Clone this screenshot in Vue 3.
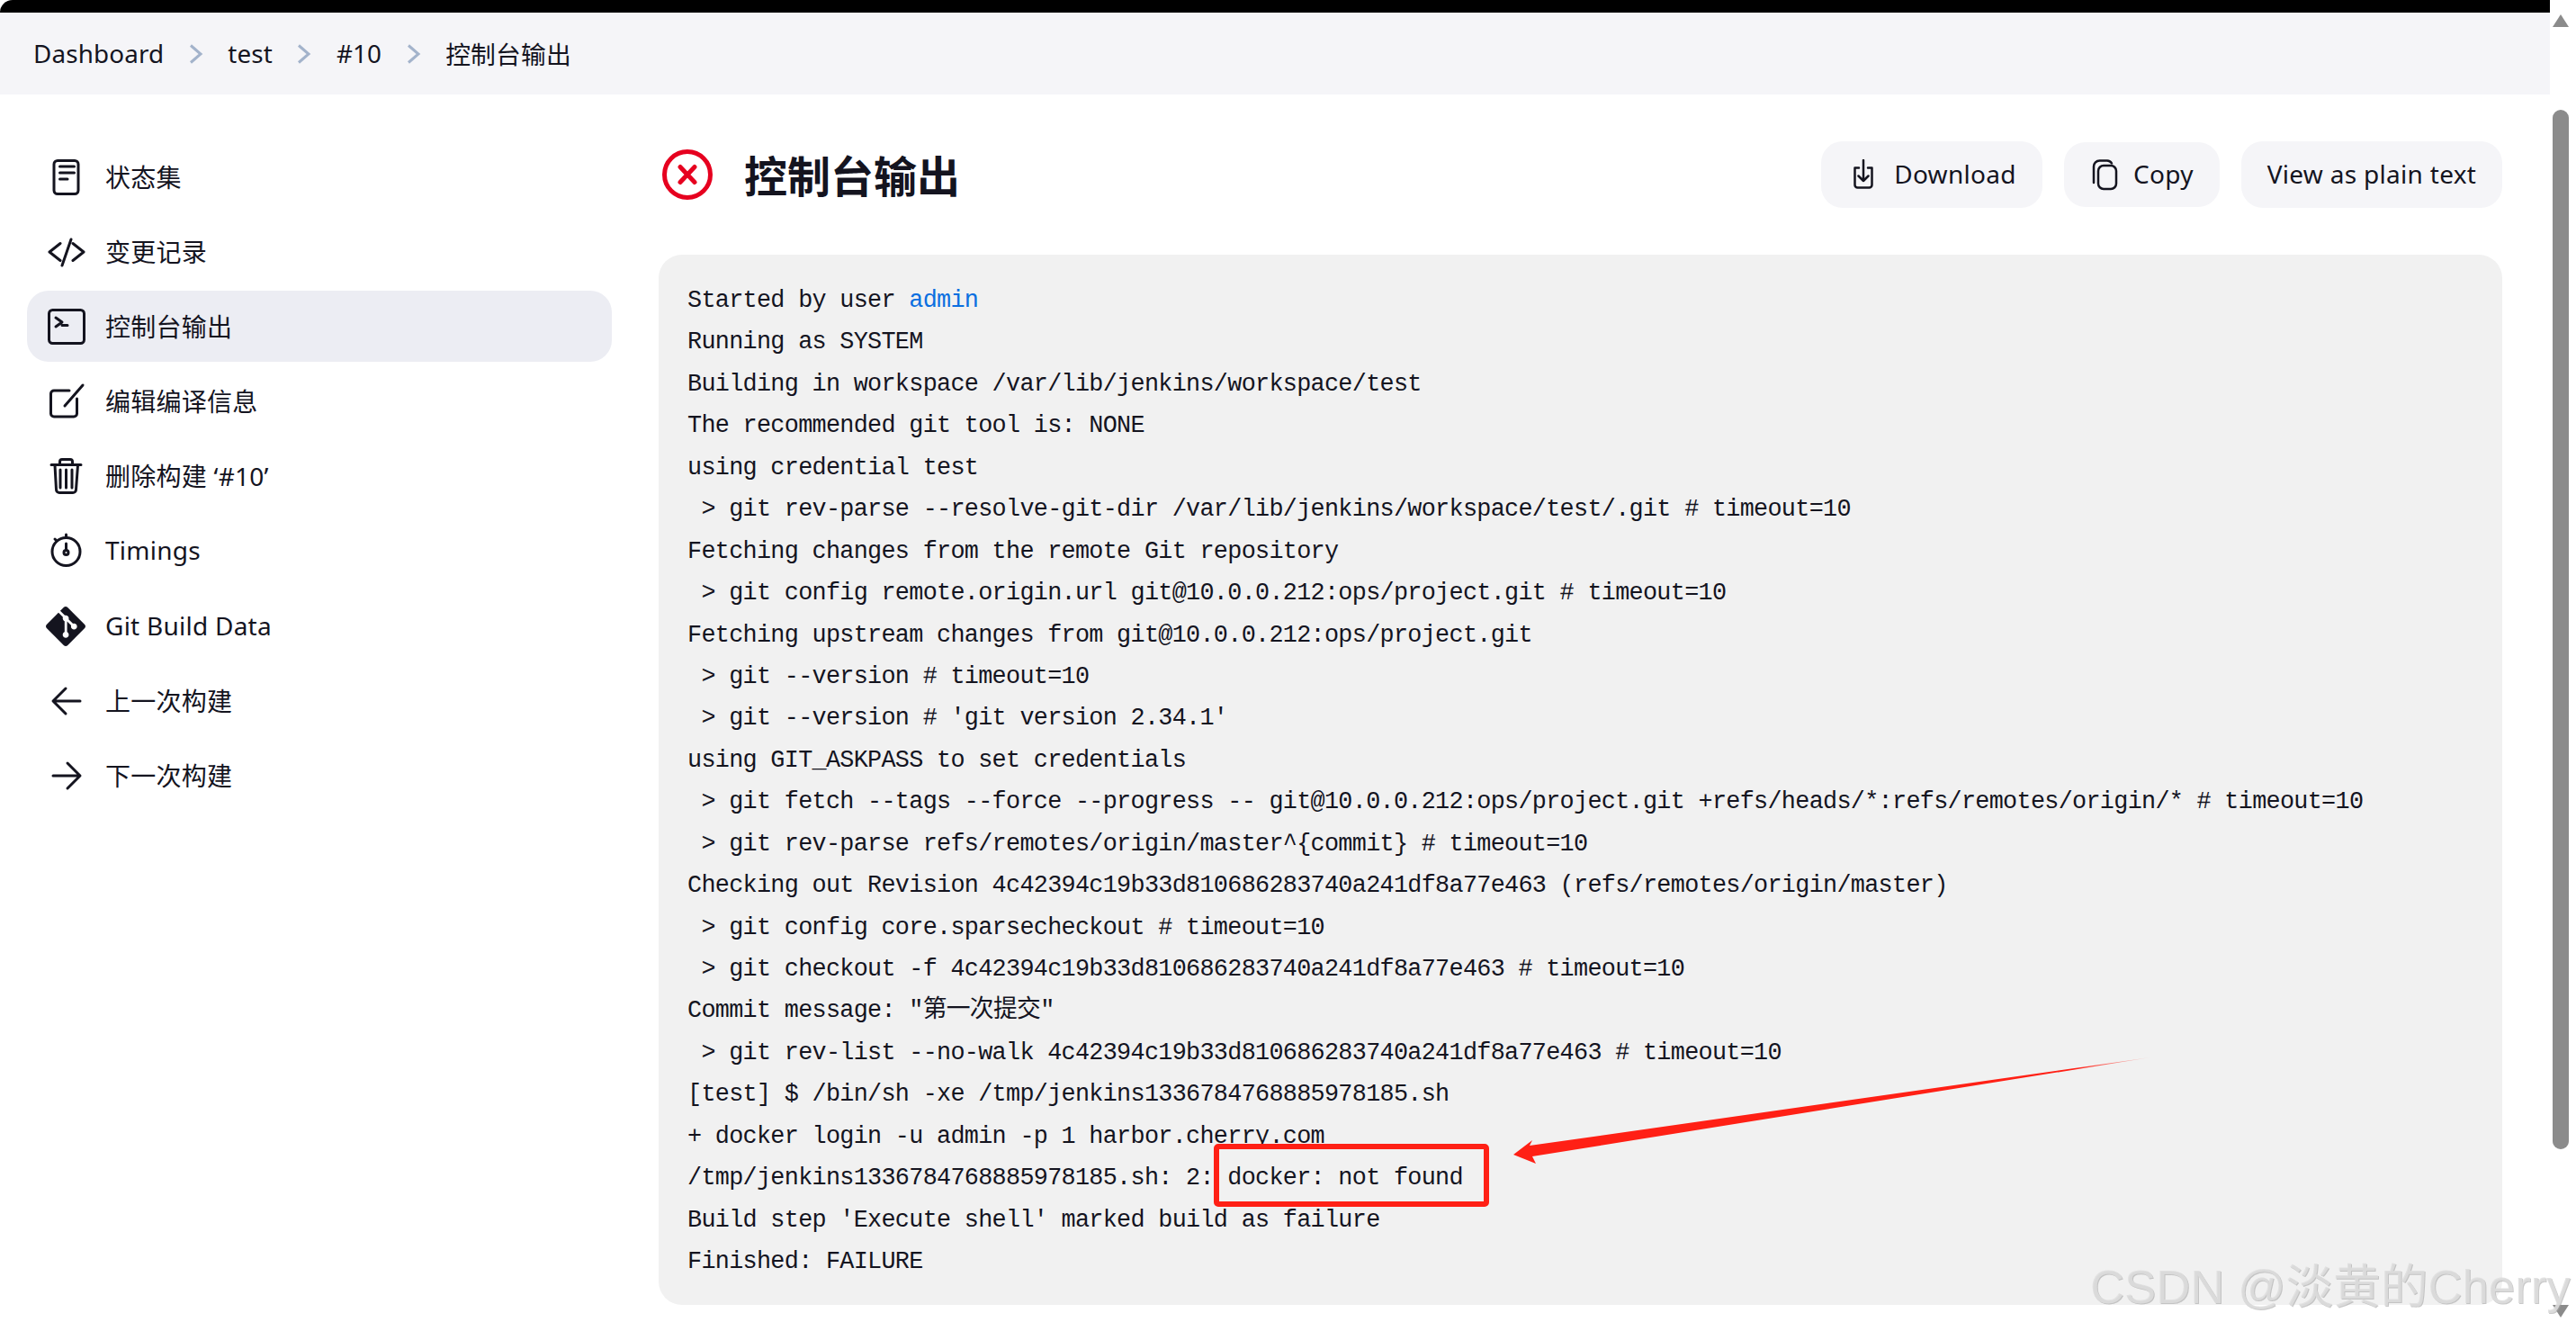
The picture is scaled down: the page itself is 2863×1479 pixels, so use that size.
<script setup>
const crumbs = ['Dashboard', 'test', '#10', '控制台输出']
const menu = [
  { id: 'doc', label: '状态集' },
  { id: 'code', label: '变更记录' },
  { id: 'term', label: '控制台输出', active: true },
  { id: 'edit', label: '编辑编译信息' },
  { id: 'trash', label: '删除构建 ‘#10’' },
  { id: 'timer', label: 'Timings' },
  { id: 'git', label: 'Git Build Data' },
  { id: 'prev', label: '上一次构建' },
  { id: 'next', label: '下一次构建' }
]
const lines = [
  'Running as SYSTEM',
  'Building in workspace /var/lib/jenkins/workspace/test',
  'The recommended git tool is: NONE',
  'using credential test',
  ' > git rev-parse --resolve-git-dir /var/lib/jenkins/workspace/test/.git # timeout=10',
  'Fetching changes from the remote Git repository',
  ' > git config remote.origin.url git@10.0.0.212:ops/project.git # timeout=10',
  'Fetching upstream changes from git@10.0.0.212:ops/project.git',
  ' > git --version # timeout=10',
  " > git --version # 'git version 2.34.1'",
  'using GIT_ASKPASS to set credentials',
  ' > git fetch --tags --force --progress -- git@10.0.0.212:ops/project.git +refs/heads/*:refs/remotes/origin/* # timeout=10',
  ' > git rev-parse refs/remotes/origin/master^{commit} # timeout=10',
  'Checking out Revision 4c42394c19b33d810686283740a241df8a77e463 (refs/remotes/origin/master)',
  ' > git config core.sparsecheckout # timeout=10',
  ' > git checkout -f 4c42394c19b33d810686283740a241df8a77e463 # timeout=10',
  'Commit message: "第一次提交"',
  ' > git rev-list --no-walk 4c42394c19b33d810686283740a241df8a77e463 # timeout=10',
  '[test] $ /bin/sh -xe /tmp/jenkins1336784768885978185.sh',
  '+ docker login -u admin -p 1 harbor.cherry.com',
  '/tmp/jenkins1336784768885978185.sh: 2: docker: not found',
  "Build step 'Execute shell' marked build as failure",
  'Finished: FAILURE'
]
</script>

<template>
  <div class="root">
    <div class="main">
      <div class="topbar"></div>
      <nav class="crumbs">
        <template v-for="(c, i) in crumbs" :key="c">
          <span class="crumb">{{ c }}</span>
          <svg v-if="i < crumbs.length - 1" class="chev" viewBox="0 0 16 22" width="16" height="22">
            <path d="M2 1.5 13 11 2 20.5" />
          </svg>
        </template>
      </nav>
      <div class="body">
        <aside class="side">
          <div v-for="m in menu" :key="m.id" class="item" :class="{ active: m.active }">
            <svg class="ico" viewBox="0 0 44 44" width="44" height="44">
              <g v-if="m.id === 'doc'">
                <rect x="9" y="3.5" width="27" height="37" rx="4" />
                <path d="M15.5 10h16M15.5 17h16M15.5 24h8.500" />
              </g>
              <g v-else-if="m.id === 'code'">
                <path d="M16 12.500 4 22l12 9.500M30 12.500 42 22l-12 9.500M28 8 18 37" />
              </g>
              <g v-else-if="m.id === 'term'">
                <rect x="3.500" y="3.500" width="39" height="37" rx="4" />
                <path d="M11 12l7 5-7 5M18 20.500h6" />
              </g>
              <g v-else-if="m.id === 'edit'">
                <path d="M26 10H9a3.500 3.500 0 0 0-3.500 3.500v22A3.500 3.500 0 0 0 9 39h22a3.500 3.500 0 0 0 3.500-3.500V19M41 4 21 27" />
              </g>
              <g v-else-if="m.id === 'trash'">
                <path d="M6 9.500h33M15.500 9V6a2.500 2.500 0 0 1 2.500-2.500h9A2.500 2.500 0 0 1 29.500 6v3M10 10l1.500 27a3.500 3.500 0 0 0 3.500 3.500h15a3.500 3.500 0 0 0 3.500-3.500L35.500 10M16 15v20M22.500 15v20M29 15v20" />
              </g>
              <g v-else-if="m.id === 'timer'">
                <circle cx="22.500" cy="23" r="15.500" />
                <circle cx="22.500" cy="24" r="2.500" />
                <path d="M22.500 21v-7M22.500 7.500V4M10 9l2 2" />
              </g>
              <g v-else-if="m.id === 'git'" transform="scale(1.833)">
                <path class="solid" d="M23.546 10.93L13.067.452c-.604-.603-1.582-.603-2.188 0L8.708 2.627l2.76 2.76c.645-.215 1.379-.07 1.889.441.516.515.658 1.258.438 1.9l2.658 2.66c.645-.223 1.387-.078 1.9.435.721.72.721 1.884 0 2.604-.719.719-1.881.719-2.6 0-.539-.541-.674-1.337-.404-1.996L12.86 8.955v6.525c.176.086.342.203.488.348.713.721.713 1.883 0 2.6-.719.721-1.889.721-2.609 0-.719-.719-.719-1.879 0-2.598.182-.18.387-.316.605-.406V8.835c-.217-.091-.424-.222-.6-.401-.545-.545-.676-1.342-.396-2.009L7.636 3.7.45 10.881c-.6.605-.6 1.584 0 2.189l10.48 10.477c.604.604 1.582.604 2.186 0l10.43-10.43c.605-.603.605-1.582 0-2.187" />
              </g>
              <g v-else-if="m.id === 'prev'">
                <path d="M38 22H9M22 8 8 22l14 14" />
              </g>
              <g v-else>
                <path d="M8 22h29M24 8l14 14-14 14" />
              </g>
            </svg>
            <span class="label">{{ m.label }}</span>
          </div>
        </aside>
        <section class="content">
          <header class="head">
            <svg class="err" viewBox="0 0 58 58" width="58" height="58">
              <circle cx="29" cy="29" r="25.500" />
              <path d="M21 20.500 37 37.500M37 20.500 21 37.500" />
            </svg>
            <h1 class="title">控制台输出</h1>
            <div class="actions">
              <div class="btn dl">
                <svg class="bico" viewBox="0 0 28 34" width="28" height="34">
                  <path d="M9 9.500H4.500v19a3 3 0 0 0 3 3h13a3 3 0 0 0 3-3v-19H19M14 1v23M8.500 18.500 14 24l5.500-5.500" />
                </svg>
                <span>Download</span>
              </div>
              <div class="btn narrow">
                <svg class="bico" viewBox="0 0 32 36" width="32" height="36">
                  <rect x="9" y="8" width="20" height="26" rx="6" />
                  <path d="M4 27V9a6.500 6.500 0 0 1 6.500-6.500H19a6 6 0 0 1 5 3" />
                </svg>
                <span>Copy</span>
              </div>
              <div class="btn plain"><span>View as plain text</span></div>
            </div>
          </header>
          <pre class="console"><div class="line">Started by user <span class="link">admin</span></div><div v-for="(l, i) in lines" :key="i" class="line">{{ l }}</div></pre>
        </section>
      </div>
    </div>
    <div class="scroll">
      <div class="arrow up"></div>
      <div class="thumb"></div>
      <div class="arrow down"></div>
    </div>

    <svg class="annot" viewBox="0 0 2863 1479" width="2863" height="1479">
      <defs>
        <linearGradient id="tail" gradientUnits="userSpaceOnUse" x1="1690" y1="1280" x2="2390" y2="1176">
          <stop offset="0" stop-color="#ff2015" />
          <stop offset="0.88" stop-color="#ff2015" />
          <stop offset="1" stop-color="#ff2015" stop-opacity="0.15" />
        </linearGradient>
      </defs>
      <rect class="box" x="1352" y="1274" width="300" height="64" rx="2" />
      <path d="M1682 1283 1703 1267 1700 1273 2390 1175 1703 1285 1707 1293Z" fill="url(#tail)" />
    </svg>
    <div class="mark">CSDN @淡黄的Cherry</div>
  </div>
</template>

<style>
html, body { margin: 0; background: #fff; overflow: hidden; }
</style>

<style scoped>
.root {
  position: relative;
  width: 2863px;
  height: 1479px;
  overflow: hidden;
  display: flex;
  background: #fff;
  color: #14141f;
  font-family: "Noto Sans", "Noto Sans CJK SC", sans-serif;
  font-size: 28px;
}
.main { width: 2834px; flex: none; display: flex; flex-direction: column; }
.topbar { height: 14px; background: #000; border-top-left-radius: 14px; }
.crumbs {
  height: 91px;
  background: #f5f5f8;
  display: flex;
  align-items: center;
  padding-left: 37px;
  gap: 27.500px;
  font-size: 27.800px;
  letter-spacing: 0.150px;
}
.crumb { white-space: nowrap; padding-bottom: 2px; }
.chev { fill: none; stroke: #a3b3cb; stroke-width: 3; flex: none; }
.body { display: flex; flex: 1; min-height: 0; }
.side {
  width: 650px;
  margin-left: 30px;
  padding-top: 52px;
  display: flex;
  flex-direction: column;
  gap: 4.200px;
  flex: none;
}
.item {
  height: 79px;
  display: flex;
  align-items: center;
  gap: 22px;
  padding-left: 21px;
  border-radius: 24px;
}
.item.active { background: #ecedf3; }
.ico { flex: none; fill: none; stroke: #14141f; stroke-width: 3; stroke-linecap: round; stroke-linejoin: round; }
.ico .solid { fill: #14141f; stroke: none; }
.label { white-space: nowrap; padding-bottom: 2px; letter-spacing: 0.250px; }
.content { width: 2049px; margin-left: 52px; padding-top: 52px; flex: none; }
.head { height: 74px; display: flex; align-items: center; margin-bottom: 52px; }
.err { flex: none; margin-left: 3px; fill: none; stroke: #e6001f; stroke-width: 5; stroke-linecap: round; }
.title { margin: 0 0 0 34px; padding-bottom: 2px; font-size: 48px; line-height: 72px; font-weight: 700; font-family: "Noto Sans CJK SC", sans-serif; }
.actions { margin-left: auto; display: flex; align-items: center; gap: 24px; }
.btn {
  height: 74px;
  width: 246px;
  box-sizing: border-box;
  background: #f5f5f8;
  border-radius: 24px;
  display: flex;
  align-items: center;
  justify-content: center;
  gap: 17px;
  white-space: nowrap;
  letter-spacing: 0.300px;
}
.btn span { padding-bottom: 2px; }
.btn.dl { gap: 20px; padding-left: 4px; }
.btn.narrow { width: 173px; height: 72px; gap: 16px; }
.btn.plain { width: 290px; }
.bico { flex: none; fill: none; stroke: #14141f; stroke-width: 2.500; stroke-linecap: round; stroke-linejoin: round; }
.console {
  margin: 0;
  height: 1167px;
  box-sizing: border-box;
  padding: 28px 32px;
  background: #f1f1f1;
  border-radius: 26px;
  font-family: "Liberation Mono", "Noto Sans CJK SC", monospace;
  font-size: 26.800px;
  letter-spacing: -0.690px;
  line-height: 46.450px;
  color: #14141f;
}
.line { height: 46.450px; white-space: pre; }
.link { color: #0b6fe0; }
.scroll { width: 29px; flex: none; display: flex; flex-direction: column; align-items: center; padding-top: 16px; box-sizing: border-box; }
.arrow { width: 0; height: 0; border-left: 9px solid transparent; border-right: 9px solid transparent; margin-left: -5px; }
.arrow.up { border-bottom: 14px solid #8b8b8b; }
.arrow.down { border-top: 14px solid #8b8b8b; margin-top: 173px; }
.thumb { width: 18px; height: 1155px; margin-top: 92px; margin-left: -5px; background: #8b8b8b; border-radius: 9px; }
.annot { position: absolute; left: 0; top: 0; pointer-events: none; }
.box { fill: none; stroke: #ff2015; stroke-width: 6; }
.mark {
  position: absolute;
  left: 2323px;
  top: 1396px;
  font-family: "Liberation Sans", "Noto Sans CJK SC", sans-serif;
  font-size: 52.700px;
  line-height: 68px;
  white-space: nowrap;
  color: rgba(222, 222, 222, 0.85);
  text-shadow: 1px 1px 0 rgba(165, 165, 165, 0.6);
}
</style>
